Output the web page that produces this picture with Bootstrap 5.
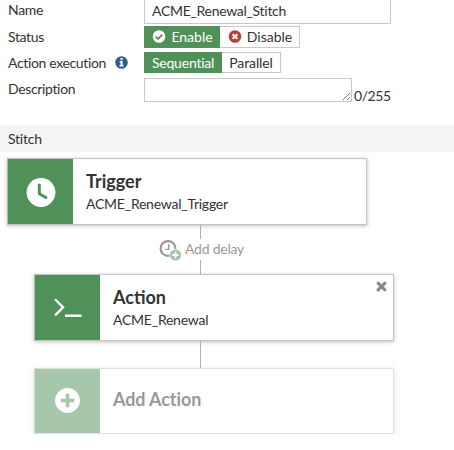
<!DOCTYPE html>
<html lang="en">
<head>
  <meta charset="UTF-8" />
  <title>Edit Automation Stitch</title>
  <meta name="viewport" content="width=device-width, initial-scale=1" />
  <link href="https://cdn.jsdelivr.net/npm/bootstrap@5.3.0/dist/css/bootstrap.min.css" rel="stylesheet" />
  <style>
    body { font-family: Lato, sans-serif; font-size: 14px; line-height: 20px; letter-spacing: -.24px; color: #333; background: #fff; overflow: hidden; }
    svg { display: block; flex: none; }
    .field-label { width: 136px; flex: none; letter-spacing: -.35px; }
    .form-control { font-size: 14px; line-height: 20px; letter-spacing: -.3px; color: #333; border-color: #c8c8c8; padding: 2px 7px 0; }
    .name-row { height: 24px; }
    .name-row .form-control { width: 247px; height: 24px; border-top: 0; padding: 0 7px 2px; }
    .status-row { height: 22px; margin-top: 2px; }
    .exec-row { height: 21px; margin-top: 4px; }
    .desc-row { height: 25px; margin-top: 5px; }
    .desc-row .field-label { padding-top: 1px; }
    .desc-row .form-control { width: 208px; height: 24px; min-height: 24px; resize: none; }
    .desc-box { position: relative; height: 24px; }
    .grip { position: absolute; right: 1px; bottom: 1px; }
    .counter { margin: 8px 0 0 2px; letter-spacing: -.45px; }
    .btn-group .btn { --bs-btn-font-size: 14px; --bs-btn-line-height: 18px; --bs-btn-color: #333; --bs-btn-border-color: #c8c8c8; --bs-btn-padding-x: 7px; --bs-btn-padding-y: 0; height: 100%; flex: none; letter-spacing: -.1px; }
    .btn-group .btn.active { --bs-btn-active-bg: #4f9159; --bs-btn-active-border-color: #4f9159; --bs-btn-active-color: #fff; }
    .status-row .btn { gap: 5px; letter-spacing: 0; --bs-btn-padding-x: 0; padding-left: 1px; }
    .w-enable { width: 76px; }
    .w-disable { width: 81px; }
    .btn-group .w-seq { width: 78px; letter-spacing: -.22px; }
    .w-par { width: 60px; }
    .section-bar { height: 27px; margin-top: 22px; background: #f4f4f4; }
    .flow { padding: 6px 0 0 7px; }
    .step { width: 360px; height: 67px; border: 1px solid #c4c4c4; border-left-color: #a9c0ab; background: #fff; box-shadow: 0 1px 4px rgba(0, 0, 0, .25); }
    .step-icon { width: 65px; background: #4f9159; flex: none; }
    .step-body { padding: 10px 13px 0; }
    .step-title { font-size: 18px; line-height: 25px; font-weight: 700; letter-spacing: 0; }
    .step-child { margin-left: 27px; }
    .step-add { height: 66px; opacity: .5; }
    .step-add .step-title { letter-spacing: -.1px; }
    .step-remove { margin: 6px 6px 0 auto; }
    .connector { width: 1px; margin-left: 193px; background: #b0b0b0; }
    .delay { height: 21px; padding-left: 152px; gap: 3px; color: #999; }
    .delay span { padding-bottom: 2px; }
  </style>
</head>
<body>
<form>
  <div class="name-row d-flex ms-2">
    <label class="field-label" for="name">Name</label>
    <input id="name" type="text" class="form-control rounded-0" value="ACME_Renewal_Stitch" />
  </div>
  <div class="status-row d-flex align-items-center ms-2">
    <span class="field-label">Status</span>
    <div class="btn-group h-100" role="group" aria-label="Status">
      <button type="button" class="btn active w-enable rounded-0 d-flex align-items-center justify-content-center">
        <svg width="14" height="14" viewBox="0 0 14 14"><circle cx="7" cy="6.5" r="6.3" fill="#fff"/><path d="M3.8 6.7l2.3 2.3 4.2-4.3" fill="none" stroke="#4f9159" stroke-width="1.8"/></svg>
        Enable
      </button>
      <button type="button" class="btn w-disable rounded-0 d-flex align-items-center justify-content-center">
        <svg width="14" height="14" viewBox="0 0 14 14"><circle cx="7" cy="6.5" r="6.3" fill="#b84038"/><path d="M4.7 4.2l4.6 4.6M9.3 4.2L4.7 8.8" stroke="#fff" stroke-width="2.2"/></svg>
        Disable
      </button>
    </div>
  </div>
  <div class="exec-row d-flex align-items-center ms-2">
    <span class="field-label d-flex align-items-center">Action execution
      <svg class="ms-2" width="14" height="14" viewBox="0 0 14 14"><circle cx="7.5" cy="6.5" r="6.3" fill="#2f5f8f"/><path d="M6.5 2.1h2v1.8h-2zM5.7 5.1h2.9v4h.9v1.3H5.6V9.1h.9V6.4h-.8z" fill="#fff"/></svg>
    </span>
    <div class="btn-group h-100" role="group" aria-label="Action execution">
      <button type="button" class="btn active w-seq rounded-0">Sequential</button>
      <button type="button" class="btn w-par rounded-0">Parallel</button>
    </div>
  </div>
  <div class="desc-row d-flex ms-2">
    <label class="field-label" for="description">Description</label>
    <div class="desc-box">
      <textarea id="description" class="form-control rounded-0" rows="1"></textarea>
      <svg class="grip" width="9" height="9" viewBox="0 0 9 9"><path d="M1 8l7-7M5 8l3-3" stroke="#666" stroke-width=".9"/></svg>
    </div>
    <span class="counter">0/255</span>
  </div>
</form>

<div class="section-bar d-flex align-items-center px-2">Stitch</div>

<div class="flow">
  <div class="step d-flex">
    <div class="step-icon d-flex align-items-center justify-content-center">
      <svg width="30" height="30" viewBox="0 0 30 30"><circle cx="15" cy="15.5" r="14.4" fill="#fff"/><path d="M13.3 8v8.7l6.7 3.8" fill="none" stroke="#4f9159" stroke-width="3" stroke-linecap="round" stroke-linejoin="round"/></svg>
    </div>
    <div class="step-body">
      <div class="step-title">Trigger</div>
      <div>ACME_Renewal_Trigger</div>
    </div>
  </div>

  <div class="connector" style="height: 14px"></div>
  <div class="delay d-flex align-items-center">
    <svg width="23" height="22" viewBox="0 0 23 22"><circle cx="9" cy="9.5" r="7.4" fill="none" stroke="#999" stroke-width="2.2"/><path d="M9.7 5v5.4H6.2" fill="none" stroke="#999" stroke-width="1.4"/><circle cx="16.5" cy="16" r="6.2" fill="#fff"/><circle cx="16.5" cy="16" r="5.6" fill="#a2c6a3"/><path d="M16.5 12.8v6.4M13.3 16h6.4" stroke="#fff" stroke-width="1.8"/></svg>
    <span>Add delay</span>
  </div>
  <div class="connector" style="height: 14px"></div>

  <div class="step step-child d-flex">
    <div class="step-icon d-flex align-items-center justify-content-center">
      <svg width="28" height="20" viewBox="0 0 28 20"><path d="M1.8 2l7.3 7.3-7.3 7.3M12 17.8h14.5" fill="none" stroke="#fff" stroke-width="2.4" stroke-linecap="round"/></svg>
    </div>
    <div class="step-body">
      <div class="step-title">Action</div>
      <div>ACME_Renewal</div>
    </div>
    <svg class="step-remove" width="11" height="11" viewBox="0 0 11 11"><path d="M2.1 2.1l6.8 6.8M8.9 2.1L2.1 8.9" stroke="#888" stroke-width="3" stroke-linecap="round"/></svg>
  </div>

  <div class="connector" style="height: 27px"></div>

  <div class="step step-child step-add d-flex">
    <div class="step-icon d-flex align-items-center justify-content-center">
      <svg width="26" height="26" viewBox="0 0 26 26"><circle cx="12.5" cy="12.5" r="12.4" fill="#fff"/><path d="M12.5 5.7v13.6M5.7 12.5h13.6" stroke="#4f9159" stroke-width="3.6"/></svg>
    </div>
    <div class="step-body d-flex align-items-center pt-0 pb-1">
      <div class="step-title">Add Action</div>
    </div>
  </div>
</div>
<script src="https://cdn.jsdelivr.net/npm/bootstrap@5.3.0/dist/js/bootstrap.bundle.min.js"></script>
</body>
</html>
